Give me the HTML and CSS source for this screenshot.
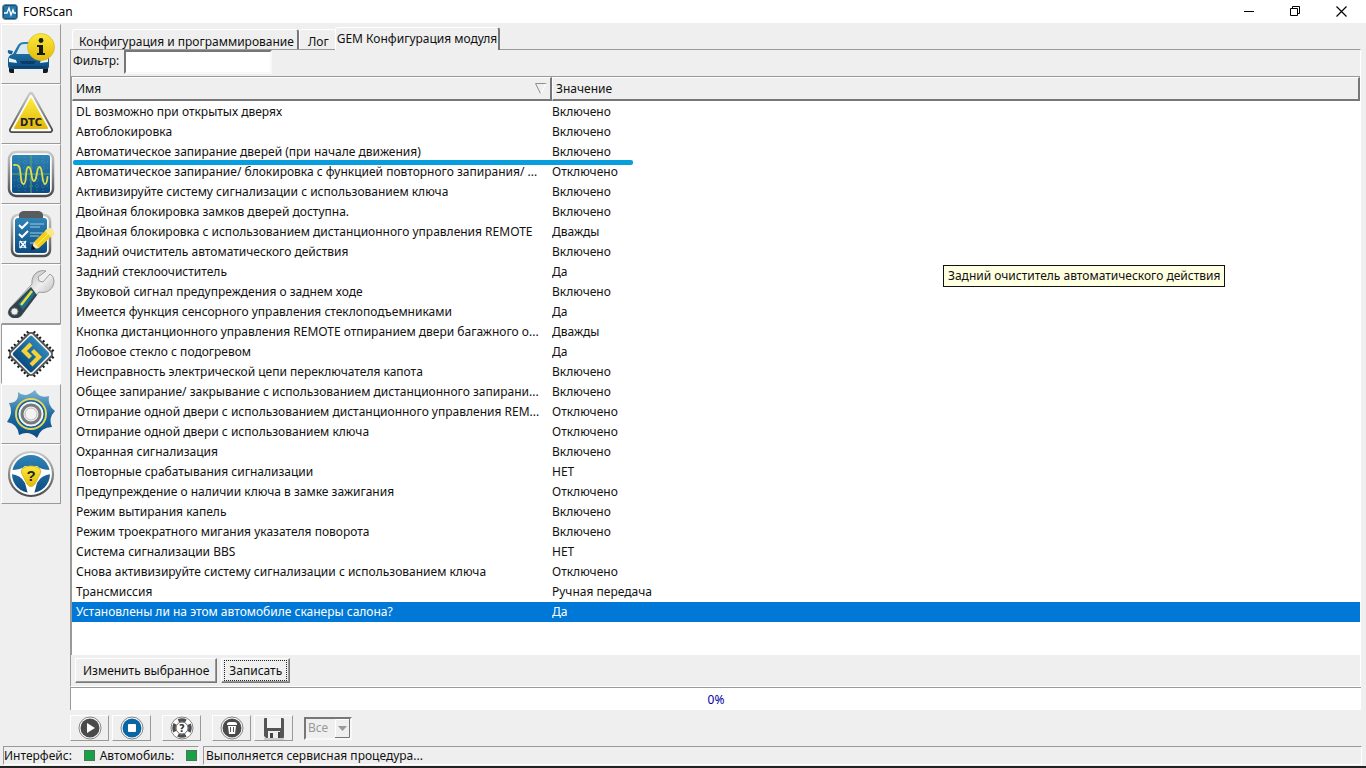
FILE: index.html
```html
<!DOCTYPE html>
<html lang="ru">
<head>
<meta charset="utf-8">
<title>FORScan</title>
<link rel="stylesheet" href="styles.css">
</head>
<body>
<svg class="defs" aria-hidden="true">
  <defs>
    <linearGradient id="blue" x1="0" y1="0" x2="0" y2="1"><stop offset="0" stop-color="#2f83b5"/><stop offset="1" stop-color="#0b4c82"/></linearGradient>
    <linearGradient id="gear" x1="0" y1="0" x2="0" y2="1"><stop offset="0" stop-color="#7fb2d3"/><stop offset=".5" stop-color="#1e6da4"/><stop offset="1" stop-color="#0b4c82"/></linearGradient>
    <linearGradient id="yellow" x1="0" y1="0" x2="0" y2="1"><stop offset="0" stop-color="#fbea3c"/><stop offset="1" stop-color="#e3b90c"/></linearGradient>
    <linearGradient id="metal" x1="0" y1="0" x2="0" y2="1"><stop offset="0" stop-color="#c9c9c9"/><stop offset="1" stop-color="#4c4c4c"/></linearGradient>
    <linearGradient id="chrome" x1="0" y1="0" x2="1" y2="1"><stop offset="0" stop-color="#8f8f8f"/><stop offset=".5" stop-color="#eeeeee"/><stop offset="1" stop-color="#8a8a8a"/></linearGradient>
  </defs>
</svg>
<div class="window">
  <header class="titlebar">
    <svg class="app-logo" viewBox="0 0 16 16"><rect x=".5" y=".5" width="15" height="15" rx="3" fill="#174f79" stroke="#6a8da6"/><rect x="2" y="2" width="12" height="12" rx="1" fill="#2378ab"/><path d="M2 9h3l2-5 2 7 2-5 1 3h2" fill="none" stroke="#fff" stroke-width="1.3"/></svg>
    <h1 class="title">FORScan</h1>
    <div class="window-controls">
      <button class="window-button" aria-label="Свернуть"><svg viewBox="0 0 11 11"><path d="M0 5.5h10" fill="none" stroke="#000"/></svg></button>
      <button class="window-button" aria-label="Восстановить"><svg viewBox="0 0 11 11"><path d="M.5 2.500h7v7h-7zM2.500 2.500v-2h7v7h-2" fill="none" stroke="#000"/></svg></button>
      <button class="window-button" aria-label="Закрыть"><svg viewBox="0 0 11 11"><path d="M.5.5l10 10M10.500.5l-10 10" fill="none" stroke="#000" stroke-width="1.2"/></svg></button>
    </div>
  </header>

  <div class="workspace">
    <nav class="sidebar">
      <button class="side-button" aria-label="Автомобиль"><svg viewBox="0 0 48 48">
        <path d="M2 37h5v6H4q-2 0-2-2zM36 37h5v4q0 2-2 2h-3z" fill="#15191c"/>
        <path d="M6 24l5-9q2-3 6-3h14q5 0 7 4l4 8v12q0 3-3 3H4q-3 0-3-4v-5q0-5 5-6z" fill="url(#blue)"/>
        <path d="M9 24l4-8q1-2 4-2h13l6 10z" fill="#d6e9f3"/><path d="M1 20l5 1-1 3H2q-2-2-1-4z" fill="#14639a"/>
        <path d="M2 28l7 2 1 3-8-1zM41 28l-7 2-1 3 8-1z" fill="#e5f2f8"/><path d="M13 31h16l-2 3H15z" fill="#093c68"/><path d="M4 37h36" stroke="#0a3f69" stroke-width="1.500"/>
        <circle cx="34" cy="17" r="13.500" fill="url(#yellow)" stroke="#d7b623" stroke-width=".7"/>
        <circle cx="34" cy="10.500" r="2.400" fill="#16191a"/><path d="M30 15h6v8h2v2h-8v-2h2v-6h-2z" fill="#16191a"/></svg></button>
      <button class="side-button" aria-label="DTC"><svg viewBox="0 0 48 48">
        <path d="M24 5L43 40H5z" fill="url(#metal)" stroke="url(#metal)" stroke-width="6" stroke-linejoin="round"/>
        <path d="M24 6L43 40H5z" fill="#fff" stroke="#fff" stroke-width="2.500" stroke-linejoin="round"/>
        <path d="M24 9L40 38H8z" fill="url(#yellow)" stroke="url(#yellow)" stroke-width="2" stroke-linejoin="round"/>
        <text class="dtc" x="24" y="36" text-anchor="middle">DTC</text></svg></button>
      <button class="side-button" aria-label="Осциллограф"><svg viewBox="0 0 48 48">
        <rect x="2" y="2" width="44" height="44" rx="7" fill="#fff" stroke="url(#metal)" stroke-width="2.500"/>
        <rect x="5" y="5" width="38" height="38" rx="2" fill="url(#blue)"/>
        <path d="M12 7v34M18 7v34M30 7v34M36 7v34M7 12h34M7 18h34M7 30h34M7 36h34" stroke="#5aa5bd" stroke-width=".6" stroke-dasharray="1 2"/>
        <path d="M24 5v38M5 24h38" stroke="#67a965" stroke-width="1"/>
        <path d="M7 15c5-1 6 2 6.500 8 .5 7 1 11 3 11 4 0 1-17 5-17s2 14 5.500 14 2-14 5.500-14 2 17 5.500 17c2 0 2-3 2.500-7" fill="none" stroke="#ddde4d" stroke-width="1.800" stroke-linecap="round"/></svg></button>
      <button class="side-button" aria-label="Тесты"><svg viewBox="0 0 48 48">
        <rect x="5" y="5" width="38" height="41" rx="6" fill="#fff" stroke="url(#metal)" stroke-width="2.500"/>
        <rect x="8" y="8" width="32" height="35" rx="3" fill="url(#blue)"/>
        <path d="M12 5q0-3 4-4h16q4 1 4 4v3H12z" fill="#595b5d"/>
        <path d="M12 15l3 3 6-6M12 24l3 3 6-6" fill="none" stroke="#fff" stroke-width="2"/><path d="M12.500 31.500h6v6h-6z" fill="none" stroke="#a4c9df"/><path d="M13 31l6 7M19 31l-6 7" stroke="#fff" stroke-width="1.600"/>
        <path d="M23 14h14M23 17h10M23 23h13M23 26h9M23 33h7" stroke="#a4c9df" stroke-width="1.200"/>
        <path d="M25 39l2-7 13-13 6 6-14 13z" fill="#f5cf19"/><path d="M38 21l3-3q2-1 5 2 2 3 1 5l-3 2z" fill="#f6e88b"/><path d="M25 39l2-7 5 6z" fill="#f7e3c0"/><path d="M24 40l1-5 4 4z" fill="#111"/><path d="M30 35l12-12" stroke="#fff06c"/></svg></button>
      <button class="side-button" aria-label="Сервис"><svg viewBox="0 0 48 48">
        <path d="M43 4l-7 8-4-1-1-4 8-6C31-1 24 5 25 14L3 38q-4 6 1 9 5 3 10-1l18-24c8 2 15-3 15-11q0-5-4-7z" fill="url(#chrome)" stroke="#888" stroke-width=".8"/>
        <path d="M24 17L3 38q-4 6 1 9 5 3 10-1l16-21z" fill="#33424a"/><path d="M24 19L11 34l5 6 12-16z" fill="#1b6c91"/><path d="M25 21L14 35" stroke="#e8df35" stroke-width="2.500"/>
        <circle cx="7.500" cy="41.500" r="3.600" fill="#eee" stroke="#707070"/></svg></button>
      <button class="side-button side-button-active" aria-label="Конфигурация"><svg viewBox="0 0 48 48">
        <g transform="rotate(45 24 24)"><path d="M11 5v38M15 5v38M19 5v38M24 5v38M29 5v38M33 5v38M37 5v38M5 11h38M5 15h38M5 19h38M5 24h38M5 29h38M5 33h38M5 37h38" stroke="#1a1c1d" stroke-width="2"/>
        <rect x="8" y="8" width="32" height="32" rx="4" fill="#fff" stroke="#57595a" stroke-width="2"/><rect x="10.500" y="10.500" width="27" height="27" rx="2" fill="url(#blue)"/></g>
        <path d="M24 14l-7 7 6.500 6.500M25.500 20.500L32 27l-8 8" fill="none" stroke="#f3d438" stroke-width="4.200"/></svg></button>
      <button class="side-button" aria-label="Настройки"><svg viewBox="0 0 48 48">
        <path d="M11 2Q18 9 28 0Q32 9 42 6Q40 15 48 21Q41 28 45 37Q34 37 30 48Q22 40 12 45Q11 34 0 32Q7 23 2 13Q12 13 11 2Z" fill="url(#gear)"/>
        <circle cx="24" cy="24" r="15" fill="#176496" stroke="#e5d65c" stroke-width="2"/><circle cx="24" cy="24" r="12" fill="#eee" stroke="#fff"/><circle cx="24" cy="24" r="9" fill="#f1f1f1" stroke="#77797d" stroke-width="3"/><circle cx="24" cy="24" r="6" fill="#f4f4f4" stroke="#bbb"/></svg></button>
      <button class="side-button" aria-label="Справка"><svg viewBox="0 0 48 48">
        <circle cx="24" cy="24" r="22" fill="#fff" stroke="url(#metal)" stroke-width="2.200"/><circle cx="24" cy="24" r="19" fill="url(#blue)"/>
        <path d="M4 20q10 0 14-4h12q4 4 14 4v4q-10 1-14 9l-3 11h-6l-3-11q-4-8-14-9z" fill="#fff"/>
        <path d="M16 18q8-4 16 0 3 2 1 6l-5 10q-4 5-8 0l-5-10q-2-4 1-6z" fill="url(#yellow)" stroke="#dbb626"/>
        <text class="wheel-mark" x="24" y="31" text-anchor="middle">?</text></svg></button>
    </nav>

    <main class="content">
      <div class="tabs" role="tablist">
        <button class="tab" role="tab">Конфигурация и программирование</button>
        <button class="tab tab-log" role="tab">Лог</button>
        <button class="tab tab-active" role="tab" aria-selected="true">GEM Конфигурация модуля</button>
      </div>
      <section class="panel">
        <div class="filter"><label for="filter">Фильтр:</label><input class="filter-input" id="filter" type="text"></div>
        <div class="list">
          <table class="grid">
            <colgroup><col class="col-name"><col></colgroup>
            <thead><tr><th scope="col"><div class="head-cell"><span>Имя</span><svg class="sort" viewBox="0 0 12 12"><path d="M11.500.5H.5l5 10" fill="none" stroke="#909090"/><path d="M6 10.500l5-10" fill="none" stroke="#fff"/></svg></div></th><th scope="col"><div class="head-cell">Значение</div></th></tr></thead>
            <tbody>
              <tr><td>DL возможно при открытых дверях</td><td>Включено</td></tr>
              <tr><td>Автоблокировка</td><td>Включено</td></tr>
              <tr><td class="marked">Автоматическое запирание дверей (при начале движения)</td><td>Включено</td></tr>
              <tr><td>Автоматическое запирание/ блокировка с функцией повторного запирания/ ...</td><td>Отключено</td></tr>
              <tr><td>Активизируйте систему сигнализации с использованием ключа</td><td>Включено</td></tr>
              <tr><td>Двойная блокировка замков дверей доступна.</td><td>Включено</td></tr>
              <tr><td>Двойная блокировка с использованием дистанционного управления REMOTE</td><td>Дважды</td></tr>
              <tr><td>Задний очиститель автоматического действия</td><td>Включено</td></tr>
              <tr><td>Задний стеклоочиститель</td><td>Да</td></tr>
              <tr><td>Звуковой сигнал предупреждения о заднем ходе</td><td>Включено</td></tr>
              <tr><td>Имеется функция сенсорного управления стеклоподъемниками</td><td>Да</td></tr>
              <tr><td>Кнопка дистанционного управления REMOTE отпиранием двери багажного о...</td><td>Дважды</td></tr>
              <tr><td>Лобовое стекло с подогревом</td><td>Да</td></tr>
              <tr><td>Неисправность электрической цепи переключателя капота</td><td>Включено</td></tr>
              <tr><td>Общее запирание/ закрывание с использованием дистанционного запирани...</td><td>Включено</td></tr>
              <tr><td>Отпирание одной двери с использованием дистанционного управления REM...</td><td>Отключено</td></tr>
              <tr><td>Отпирание одной двери с использованием ключа</td><td>Отключено</td></tr>
              <tr><td>Охранная сигнализация</td><td>Включено</td></tr>
              <tr><td>Повторные срабатывания сигнализации</td><td>НЕТ</td></tr>
              <tr><td>Предупреждение о наличии ключа в замке зажигания</td><td>Отключено</td></tr>
              <tr><td>Режим вытирания капель</td><td>Включено</td></tr>
              <tr><td>Режим троекратного мигания указателя поворота</td><td>Включено</td></tr>
              <tr><td>Система сигнализации BBS</td><td>НЕТ</td></tr>
              <tr><td>Снова активизируйте систему сигнализации с использованием ключа</td><td>Отключено</td></tr>
              <tr><td>Трансмиссия</td><td>Ручная передача</td></tr>
              <tr class="selected"><td>Установлены ли на этом автомобиле сканеры салона?</td><td>Да</td></tr>
            </tbody>
          </table>
          <div class="tooltip" role="tooltip">Задний очиститель автоматического действия</div>
        </div>
        <div class="actions"><button class="button">Изменить выбранное</button><button class="button button-focus"><span>Записать</span></button></div>
      </section>
      <div class="progress">0%</div>
      <div class="toolbar">
        <button class="tool" aria-label="Пуск"><svg viewBox="0 0 24 24"><circle cx="12" cy="12" r="11" fill="#fff" stroke="#858585"/><circle cx="12" cy="12" r="9.500" fill="#4a4a4a"/><path d="M9 7l8 5-8 5z" fill="#fff"/></svg></button>
        <button class="tool" aria-label="Стоп"><svg viewBox="0 0 24 24"><circle cx="12" cy="12" r="11" fill="#fff" stroke="#858585"/><circle cx="12" cy="12" r="9.500" fill="#0866a5"/><rect x="8" y="8" width="8" height="8" rx="1" fill="#fff"/></svg></button>
        <button class="tool tool-spaced" aria-label="Помощь"><svg viewBox="0 0 24 24"><circle cx="12" cy="12" r="11" fill="#fff" stroke="#858585"/><circle cx="12" cy="12" r="8" fill="none" stroke="#4d4d4d" stroke-width="3.500" stroke-dasharray="8 4.570" stroke-dashoffset="4" transform="rotate(-90 12 12)"/><circle cx="12" cy="12" r="6" fill="#fff" stroke="#666"/><text class="help-mark" x="12" y="16" text-anchor="middle">?</text></svg></button>
        <button class="tool tool-spaced" aria-label="Очистить"><svg viewBox="0 0 24 24"><circle cx="12" cy="12" r="11" fill="#fff" stroke="#858585"/><circle cx="12" cy="12" r="9.500" fill="#4a4a4a"/><path d="M7 8q0-2 3-2h4q3 0 3 2v1H7zM8 10h8l-1 8H9z" fill="#fff"/><path d="M10.500 11v5M13.500 11v5" stroke="#555"/></svg></button>
        <button class="tool" aria-label="Сохранить"><svg viewBox="0 0 24 24"><path d="M3 2h18l1 1v18q0 1-1 1H4l-2-2V3q0-1 1-1z" fill="#555"/><path d="M5 2h14v10H5z" fill="#f4f4f4"/><path d="M6 15h12v7H6z" fill="#eee"/><path d="M8 17h3v5H8zM16 16h2v6h-2z" fill="#444"/><path d="M2 23h20" stroke="#aaa"/></svg></button>
        <select class="level" aria-label="Уровень" disabled><option>Все</option></select>
      </div>
    </main>
  </div>

  <footer class="statusbar">
    <div class="status-cell status-links"><span class="status-label">Интерфейс:</span><i class="lamp"></i><span class="status-label">Автомобиль:</span><i class="lamp"></i></div>
    <div class="status-cell status-message">Выполняется сервисная процедура...</div>
  </footer>
</div>
</body>
</html>
```
FILE: styles.css
```css
* { box-sizing: border-box; }
body { margin: 0; background: #efefef; color: #111; }
body, button, input, select { font-family: "Noto Sans", "DejaVu Sans", sans-serif; font-size: 12px; line-height: 16px; }
button { margin: 0; padding: 0; color: inherit; background: #efefef; }
svg { display: block; }
.defs { position: absolute; width: 0; height: 0; }
.window { display: flex; flex-direction: column; height: 100vh; border-bottom: 2px solid #222; }

.titlebar { display: flex; align-items: center; flex: none; height: 23px; padding: 0 2px; background: #fff; }
.app-logo { width: 16px; height: 16px; }
.title { margin: 0 0 0 5px; font: 12px/16px "Noto Sans", sans-serif; color: #000; }
.window-controls { display: flex; margin-left: auto; }
.window-button { display: flex; align-items: center; justify-content: center; width: 46px; height: 21px; border: 0; background: #fff; }
.window-button svg { width: 11px; height: 11px; }

.workspace { display: flex; flex: 1; min-height: 0; }
.sidebar { flex: none; width: 61px; padding: 1px 0 0 1px; }
.side-button { display: flex; align-items: center; justify-content: center; width: 60px; height: 60px; border: 1px solid; border-color: #fff #9a9a9a #9a9a9a #fff; }
.side-button svg { width: 48px; height: 48px; }
.side-button-active { background: #fff; border-color: #9a9a9a #fff #fff #9a9a9a; }
.dtc { font: bold 11px "DejaVu Sans Condensed", sans-serif; fill: #222; }
.wheel-mark { font: bold 15px "Liberation Sans", sans-serif; fill: #222; }

.content { display: flex; flex: 1; flex-direction: column; min-width: 0; padding: 4px 5px 0 9px; }
.tabs { display: flex; align-items: flex-end; flex: none; height: 22px; padding-left: 2px; }
.tab { height: 20px; padding: 4px 3px 0 6px; border: solid; border-width: 1px 2px 0 1px; border-color: #fff #777 #fff #fff; border-radius: 3px 3px 0 0; white-space: nowrap; }
.tab-log { border-right: 0; padding: 4px 6px 0 8px; }
.tab-active { position: relative; height: 23px; margin-bottom: -1px; padding: 2px 1px; }

.panel { display: flex; flex: 1; flex-direction: column; min-height: 0; border: 1px solid; border-color: #999 #fff #fff #999; }
.filter { display: flex; flex: none; gap: 5px; height: 26px; padding-left: 2px; }
.filter label { padding-top: 3px; }
.filter-input { width: 148px; height: 24px; padding: 2px; border: 2px solid; border-color: #777 #f8f8f8 #f8f8f8 #777; background: #fff; }
.list { position: relative; flex: 1; min-height: 0; border: solid #999; border-width: 1px 0 0 1px; background: #fff; }
.grid { width: 100%; table-layout: fixed; border-collapse: separate; border-spacing: 0; }
.col-name { width: 480px; }
.grid th { height: 25px; padding: 0 0 1px; font-weight: normal; text-align: left; }
.head-cell { display: flex; align-items: center; justify-content: space-between; height: 24px; padding: 0 3px; border: solid; border-width: 1px 2px 2px 1px; border-color: #fff #777 #777 #fff; background: #efefef; }
.sort { width: 12px; height: 12px; }
.grid td { height: 20px; padding: 0 4px; overflow: hidden; white-space: nowrap; }
.grid td + td { padding-left: 0; }
.selected td { background: #0078d7; color: #fff; }
.grid .marked { position: relative; overflow: visible; }
.marked::after { content: ""; position: absolute; z-index: 1; left: 1px; bottom: -3px; width: 560px; height: 5px; border-radius: 2px; background: #079ede; }
.tooltip { position: absolute; top: 188px; left: 871px; padding: 2px 4px; border: 1px solid #111; background: #ffffe1; white-space: nowrap; }
.actions { display: flex; flex: none; gap: 4px; padding: 3px 3px 3px 4px; }
.button { height: 25px; padding: 1px 7px 0; border: 1px solid; border-color: #fff #777 #777 #fff; box-shadow: inset -1px -1px #999; white-space: nowrap; }
.button-focus { padding: 0 2px; }
.button-focus span { display: block; padding: 2px 4px 1px; border: 1px dotted #222; }

.progress { flex: none; height: 23px; border: solid #999; border-width: 1px 0 0 1px; background: #fff; color: #0000a0; line-height: 23px; text-align: center; }
.toolbar { display: flex; align-items: center; flex: none; gap: 3px; height: 36px; }
.tool { display: flex; align-items: center; justify-content: center; width: 39px; height: 26px; border: 1px solid; border-color: #fff #999 #999 #fff; }
.tool svg { width: 24px; height: 24px; }
.tool-spaced { margin-left: 8px; }
.help-mark { font: bold 10px "DejaVu Sans", sans-serif; fill: #333; }
.level { appearance: none; width: 48px; height: 23px; margin-left: 8px; padding: 0 2px; border: 2px solid; border-color: #777 #f8f8f8 #f8f8f8 #777; border-radius: 0; color: #999; opacity: 1; background: #efefef url("data:image/svg+xml,%3Csvg xmlns='http://www.w3.org/2000/svg' width='15' height='19'%3E%3Cpath d='M.5 18V.5H14' fill='none' stroke='white'/%3E%3Cpath d='M14.500 0v18.500H0' fill='none' stroke='%23777'/%3E%3Cpath d='M3 7h9l-4.500 5z' fill='%23999'/%3E%3C/svg%3E") no-repeat right center; }

.statusbar { display: flex; flex: none; gap: 4px; height: 20px; padding: 0 4px 1px 3px; }
.status-cell { display: flex; align-items: center; border: 1px solid; border-color: #999 #fff #fff #999; white-space: nowrap; }
.status-links { width: 196px; }
.status-label + .lamp { margin-left: auto; }
.lamp { width: 11px; height: 11px; margin-right: 5px; border: 1px solid #4b7655; background: #18a145; }
.lamp:last-child { margin-right: 1px; }
.status-message { flex: 1; padding-left: 2px; }
```
